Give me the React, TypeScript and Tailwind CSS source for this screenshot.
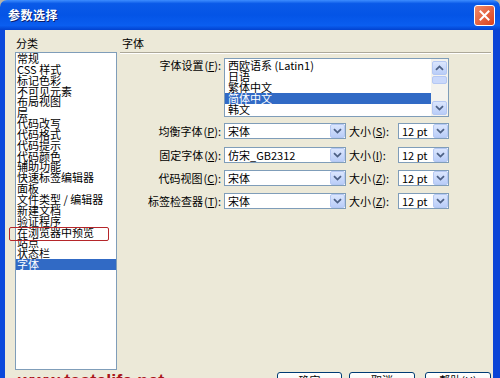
import React from "react";

const cjk = "[font-family:'Noto_Sans_CJK_SC','Liberation_Sans',sans-serif]";

const categories = [
  "常规",
  "CSS 样式",
  "标记色彩",
  "不可见元素",
  "布局视图",
  "层",
  "代码改写",
  "代码格式",
  "代码提示",
  "代码颜色",
  "辅助功能",
  "快速标签编辑器",
  "面板",
  "文件类型 / 编辑器",
  "新建文档",
  "验证程序",
  "在浏览器中预览",
  "站点",
  "状态栏",
  "字体",
];

const encodings = ["西欧语系 (Latin1)", "日语", "繁体中文", "简体中文", "韩文"];

const rows = [
  { label: "均衡字体", key: "P", font: "宋体", sizeKey: "S", mt: "mt-[6px]" },
  { label: "固定字体", key: "X", font: "仿宋_GB2312", sizeKey: "I", mt: "mt-[8px]" },
  { label: "代码视图", key: "C", font: "宋体", sizeKey: "Z", mt: "mt-[7px]" },
  { label: "标签检查器", key: "T", font: "宋体", sizeKey: "Z", mt: "mt-[7px]" },
];

const Chevron = ({ up = false }: { up?: boolean }) => (
  <svg width="9" height="6" viewBox="0 0 9 6" className={up ? "rotate-180" : ""}>
    <path d="M1 1.2 L4.5 4.6 L8 1.2" fill="none" stroke="#4d6185" strokeWidth="1.8" />
  </svg>
);

const ArrowButton = ({ up = false }: { up?: boolean }) => (
  <div className="w-[15px] h-[14px] flex items-center justify-center rounded-[2px] border border-[#b5c8f3] bg-[linear-gradient(180deg,#dbe6fd,#b9cdf8)]">
    <Chevron up={up} />
  </div>
);

const Key = ({ k }: { k: string }) => (
  <span className="ml-[1px]">
    (<span className="underline">{k}</span>):
  </span>
);

const Combo = ({ text, w }: { text: string; w: string }) => (
  <div className={`${w} h-[16px] flex items-center bg-white border border-[#7f9db9]`}>
    <span className="flex-1 pl-[3px] leading-[14px] whitespace-nowrap overflow-hidden">{text}</span>
    <ArrowButton />
  </div>
);

const XpButton = ({ children, className }: { children: React.ReactNode; className: string }) => (
  <div
    className={`${className} h-[23px] flex items-start justify-center pt-[1px] leading-[12px] rounded-[3px] border border-[#003c74] bg-[linear-gradient(180deg,#ffffff,#f3f2ec_70%,#e3e0d3)] text-[11px] text-black`}
  >
    {children}
  </div>
);

export default function App() {
  return (
    <div className={`w-[500px] h-[378px] overflow-hidden bg-[#b8b4a8] ${cjk} text-[11px] text-black relative`}>
      {/* title bar */}
      <div className="h-[30px] flex items-center rounded-t-[7px] bg-[linear-gradient(180deg,#3d8dff_0%,#0a5ae8_12%,#0454e6_50%,#0a5ef0_85%,#0242cf_100%)] pl-[8px] pr-[5px]">
        <span className="flex-1 text-white text-[12px] font-bold tracking-[0.5px] [text-shadow:1px_1px_0_#0a1e6e]">
          参数选择
        </span>
        <div className="w-[21px] h-[21px] rounded-[3px] border border-white bg-[linear-gradient(135deg,#f08a6a,#d9411c)] flex items-center justify-center">
          <svg width="11" height="11" viewBox="0 0 11 11">
            <path d="M1.5 1.5 L9.5 9.5 M9.5 1.5 L1.5 9.5" stroke="white" strokeWidth="2" strokeLinecap="square" />
          </svg>
        </div>
      </div>

      {/* body */}
      <div className="h-[348px] flex flex-col bg-[#ece9d8] border-l-[5px] border-r-[7px] border-l-[#0b49dc] border-r-[#0a44d6] pl-[10px] pr-[2px]">
        <div className="flex gap-[3px]">
          {/* categories */}
          <div className="w-[102px] flex flex-col">
            <div className="pt-[6px] leading-[14px] pl-[1px]">分类</div>
            <div className="relative mt-[2px] h-[318px] bg-white border border-[#7f9db9]">
              {categories.map((c) => (
                <div
                  key={c}
                  className={`h-[10.85px] leading-[10.85px] pl-[1px] whitespace-pre ${
                    c === "字体" ? "bg-[#316ac5] text-white" : ""
                  }`}
                >
                  {c}
                </div>
              ))}
              <div className="absolute left-[-7px] top-[174px] w-[100px] h-[14px] border border-[#b5262a] rounded-[2px]" />
            </div>
          </div>

          {/* font settings */}
          <div className="flex-1 flex flex-col">
            <div className="pt-[6px] leading-[14px] pl-[2px]">字体</div>
            <div className="mt-[2px] h-[2px] border-t border-[#aca899] border-b border-b-white" />

            <div className="mt-[4px] flex">
              <div className="w-[104px] pr-[3px] text-right pt-[1px] leading-[12px]">
                字体设置<Key k="F" />
              </div>
              <div className="w-[225px] h-[59px] flex bg-white border border-[#7f9db9]">
                <div className="flex-1 pt-[1px]">
                  {encodings.map((e) => (
                    <div
                      key={e}
                      className={`h-[10.9px] leading-[10.9px] px-[3px] whitespace-pre ${
                        e === "简体中文" ? "bg-[#316ac5] text-white" : ""
                      }`}
                    >
                      {e}
                    </div>
                  ))}
                </div>
                <div className="w-[17px] flex flex-col bg-[#f4f3ee] px-[1px] pt-[2px] pb-[1px]">
                  <ArrowButton up />
                  <div className="mt-[1px] h-[8px] rounded-[2px] border border-[#b5c8f3] bg-[#c9d8fb]" />
                  <div className="flex-1" />
                  <ArrowButton />
                </div>
              </div>
            </div>

            {rows.map((r) => (
              <div key={r.label} className={`${r.mt} flex items-center`}>
                <div className="w-[104px] pr-[3px] text-right leading-[14px] whitespace-nowrap">
                  {r.label}
                  <Key k={r.key} />
                </div>
                <Combo text={r.font} w="w-[122px]" />
                <div className="w-[47px] ml-[3px] leading-[14px] whitespace-nowrap">
                  大小<Key k={r.sizeKey} />
                </div>
                <div className="ml-[2px]">
                  <Combo text="12 pt" w="w-[51px]" />
                </div>
              </div>
            ))}
          </div>
        </div>

        {/* buttons */}
        <div className="mt-[2px] flex">
          <div className="flex-1" />
          <XpButton className="w-[65px]">确定</XpButton>
          <XpButton className="w-[66px] ml-[7px]">取消</XpButton>
          <XpButton className="w-[66px] ml-[10px]">帮助(H)</XpButton>
        </div>
      </div>

      {/* watermark */}
      <div className="absolute left-[18px] top-[372px] text-[18px] leading-[18px] font-bold text-[#a8161b] [font-family:'Liberation_Sans',Arial,sans-serif]">
        www.tastelife.net
      </div>
    </div>
  );
}
